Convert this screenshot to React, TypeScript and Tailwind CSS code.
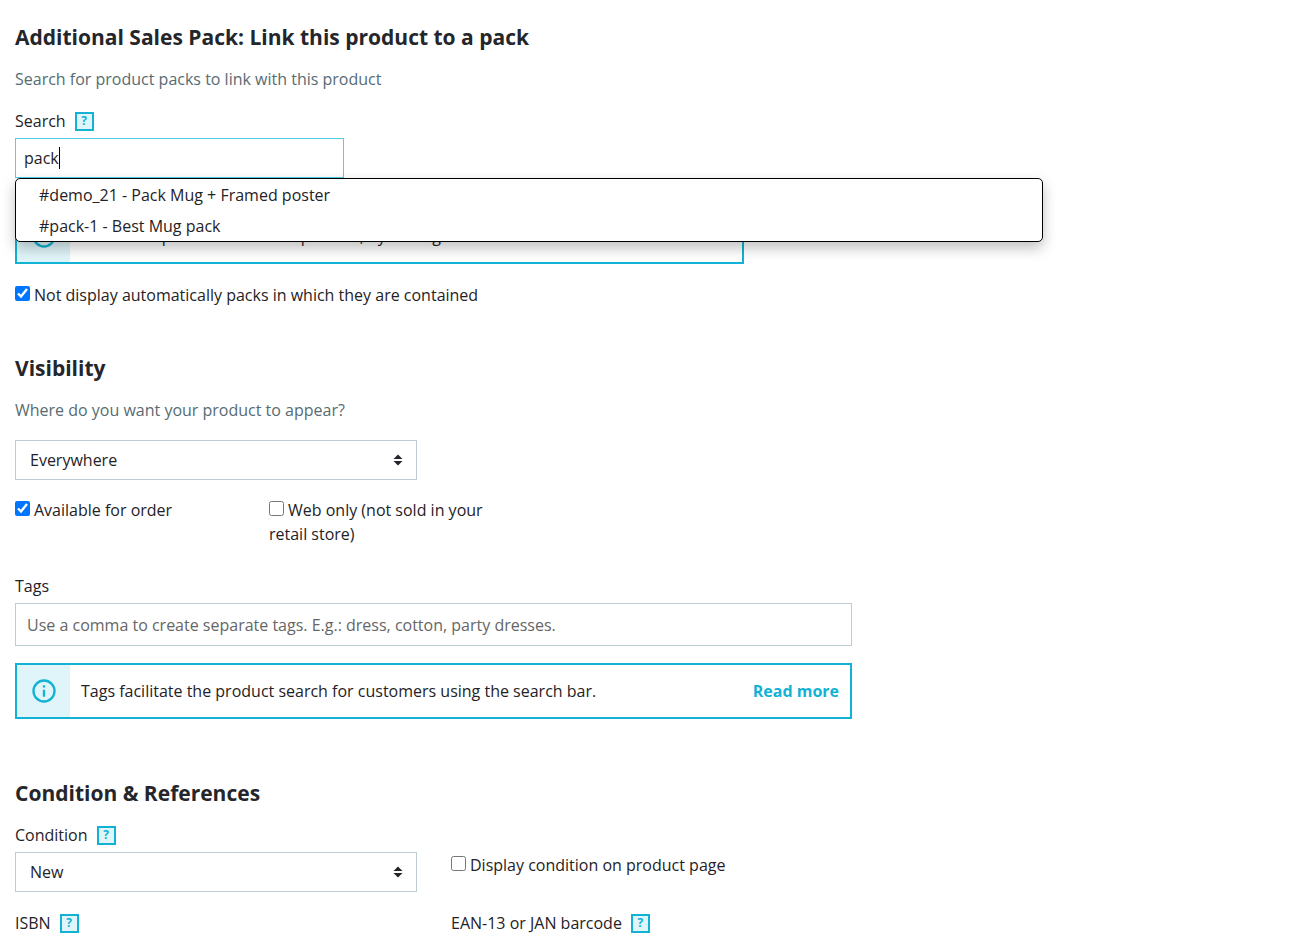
import React from "react";

function Help({ label }: { label: string }) {
  return (
    <button
      type="button"
      aria-label={label}
      className="flex h-[19px] w-[19px] items-center justify-center border-2 border-[#12b2d4] bg-[#dff5f9] text-xs font-bold leading-none text-[#12b2d4]"
    >
      ?
    </button>
  );
}

function Heading({ children }: { children: React.ReactNode }) {
  return <h2 className="text-[21px] font-bold leading-7 text-[#24262b]">{children}</h2>;
}

function Hint({ children }: { children: React.ReactNode }) {
  return <p className="mt-4 text-base leading-6 text-[#576c72]">{children}</p>;
}

function Check({ text, on = false }: { text: string; on?: boolean }) {
  return (
    <label className="block leading-6">
      <input type="checkbox" defaultChecked={on} className="mr-1 h-[15px] w-[15px] align-baseline accent-[#0075ff]" />
      {text}
    </label>
  );
}

function SelectBox({ id, label, options }: { id: string; label?: string; options: string[] }) {
  return (
    <div className="grid w-[402px] items-center">
      <select
        id={id}
        aria-label={label}
        className="col-start-1 row-start-1 h-10 w-full appearance-none border border-[#bbcdd2] bg-white px-[14px] text-base outline-none"
      >
        {options.map((o) => (
          <option key={o}>{o}</option>
        ))}
      </select>
      <svg
        viewBox="0 0 10 12"
        className="pointer-events-none col-start-1 row-start-1 mr-[14px] h-3 w-[10px] justify-self-end"
        fill="#24262b"
      >
        <path d="M5 .5l4.5 4.500h-9zM5 11.500L.5 7h9z" />
      </svg>
    </div>
  );
}

function Alert({ children, width }: { children: React.ReactNode; width: string }) {
  return (
    <div className={`flex h-14 border-2 border-[#12b2d4] ${width}`}>
      <div className="flex w-[53px] shrink-0 items-center justify-center bg-[#dff5f9]">
        <svg viewBox="0 0 24 24" className="h-7 w-7" fill="#12b2d4">
          <path d="M11 7h2v2h-2zM11 11h2v6h-2zM12 2a10 10 0 100 20 10 10 0 000-20zm0 18a8 8 0 110-16 8 8 0 010 16z" />
        </svg>
      </div>
      <div className="flex flex-1 items-center justify-between px-[11px]">{children}</div>
    </div>
  );
}

export default function App() {
  return (
    <main className="bg-white px-[15px] pt-[23px] font-['Open_Sans',sans-serif] text-base leading-6 text-[#1f2226]">
      <section>
        <Heading>Additional Sales Pack: Link this product to a pack</Heading>
        <Hint>Search for product packs to link with this product</Hint>
        <div className="mt-[18px] flex items-center gap-[9px]">
          <label htmlFor="search">Search</label>
          <Help label="Help about search" />
        </div>
        <div className="relative mt-[5px]">
          <div className="relative flex h-10 w-[329px] items-center border border-[#54cde5]">
            <input id="search" defaultValue="pack" className="h-full w-full bg-transparent px-2 outline-none" />
            <span aria-hidden="true" className="absolute left-[43px] h-[22px] w-px bg-black" />
          </div>
          <ul className="absolute left-0 top-full z-10 w-full max-w-[1028px] rounded-[5px] border border-black bg-white shadow-[0_6px_14px_rgba(0,0,0,0.25)]">
            <li className="px-[23px] pb-[3px] pt-[5px] leading-[23px]">
              <a href="#demo_21">#demo_21 - Pack Mug + Framed poster</a>
            </li>
            <li className="px-[23px] pb-[3px] pt-[5px] leading-[23px]">
              <a href="#pack-1">#pack-1 - Best Mug pack</a>
            </li>
          </ul>
        </div>
        <div className="mt-[30px]">
          <Alert width="w-[729px]">Attach the packs to the same product, by adding them to the list</Alert>
        </div>
        <div className="mt-[19px]">
          <Check on text="Not display automatically packs in which they are contained" />
        </div>
      </section>

      <section className="mt-[47px]">
        <Heading>Visibility</Heading>
        <Hint>Where do you want your product to appear?</Hint>
        <div className="mt-[18px]">
          <SelectBox id="visibility" label="Visibility" options={["Everywhere", "Catalog only", "Search only", "Nowhere"]} />
        </div>
        <div className="mt-[18px] flex gap-[30px]">
          <div className="w-[224px]">
            <Check on text="Available for order" />
          </div>
          <div className="w-[224px]">
            <Check text="Web only (not sold in your retail store)" />
          </div>
        </div>
        <label htmlFor="tags" className="mt-[28px] block">
          Tags
        </label>
        <input
          id="tags"
          placeholder="Use a comma to create separate tags. E.g.: dress, cotton, party dresses."
          className="mt-[5px] block h-[43px] w-full max-w-[837px] border border-[#bbcdd2] px-[11px] outline-none placeholder:text-[#666]"
        />
        <div className="mt-[17px]">
          <Alert width="w-full max-w-[837px]">
            <span>Tags facilitate the product search for customers using the search bar.</span>
            <a href="#tags" className="font-bold text-[#12b2d4]">
              Read more
            </a>
          </Alert>
        </div>
      </section>

      <section className="mt-[60px]">
        <Heading>Condition &amp; References</Heading>
        <div className="mt-4 flex gap-[34px]">
          <div className="w-[402px]">
            <div className="mb-[5px] flex items-center gap-[9px]">
              <label htmlFor="condition">Condition</label>
              <Help label="Help about condition" />
            </div>
            <SelectBox id="condition" options={["New", "Used", "Refurbished"]} />
          </div>
          <div className="pt-[30px]">
            <Check text="Display condition on product page" />
          </div>
        </div>
        <div className="mt-[19px] flex gap-[34px]">
          <div className="flex w-[402px] items-center gap-[9px]">
            <span>ISBN</span>
            <Help label="Help about ISBN" />
          </div>
          <div className="flex items-center gap-[9px]">
            <span>EAN-13 or JAN barcode</span>
            <Help label="Help about EAN-13 or JAN barcode" />
          </div>
        </div>
      </section>
    </main>
  );
}
